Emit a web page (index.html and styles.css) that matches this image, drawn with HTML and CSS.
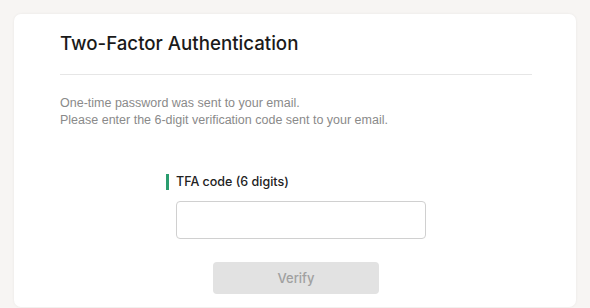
FILE: index.html
```html
<!DOCTYPE html>
<html lang="en">
<head>
<meta charset="utf-8">
<link rel="stylesheet" href="styles.css">
</head>
<body>
<div class="page">
  <div class="card">
    <h1 class="title">Two-Factor Authentication</h1>
    <div class="divider"></div>
    <p class="desc">One-time password was sent to your email.<br>Please enter the 6-digit verification code sent to your email.</p>
    <div class="form">
      <label class="label">TFA code (6 digits)</label>
      <input class="input" type="text">
      <button class="btn" disabled>Verify</button>
    </div>
  </div>
</div>
</body>
</html>
```

FILE: styles.css
```css
html, body {
  margin: 0;
  padding: 0;
  background: #f7f5f3;
  font-family: "Liberation Sans", Arial, sans-serif;
}
.page {
  padding: 14px 14px 0 14px;
  height: 308px;
  box-sizing: border-box;
  overflow: hidden;
}
.card {
  background: #fff;
  border-radius: 7px;
  box-shadow: 0 0 3px rgba(0,0,0,0.06);
  height: 293px;
  padding: 0 44px 0 46px;
  box-sizing: border-box;
}
.title {
  margin: 0;
  padding-top: 18px;
  font-family: Inter, "Liberation Sans", sans-serif;
  font-size: 18.7px;
  font-weight: 500;
  color: #1a1a1a;
  line-height: 24px;
}
.divider {
  height: 1px;
  background: #e6e6e6;
  margin-top: 18px;
}
.desc {
  margin: 20px 0 0 0;
  font-size: 12.5px;
  line-height: 17px;
  color: #8a8a8a;
}
.form {
  display: flex;
  flex-direction: column;
  align-items: center;
  margin-top: 45px;
}
.label {
  align-self: flex-start;
  margin-left: 106px;
  border-left: 3px solid #2a9d6f;
  padding-left: 7px;
  font-family: Inter, "Liberation Sans", sans-serif;
  font-size: 12.5px;
  font-weight: 500;
  line-height: 16px;
  color: #222;
}
.input {
  margin-top: 11px;
  margin-left: 10px;
  width: 250px;
  height: 38px;
  box-sizing: border-box;
  border: 1px solid #d0d0d0;
  border-radius: 4px;
  background: #fff;
}
.btn {
  margin-top: 23px;
  width: 166px;
  height: 32px;
  border: none;
  border-radius: 4px;
  background: #e2e2e2;
  color: #a0a0a0;
  font-family: Inter, "Liberation Sans", sans-serif;
  font-size: 13px;
  font-weight: 500;
}
```
